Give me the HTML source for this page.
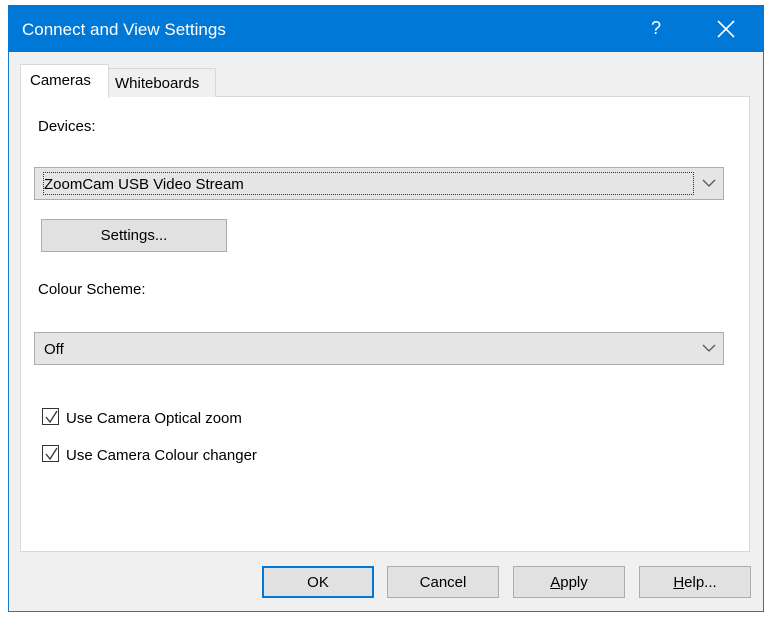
<!DOCTYPE html>
<html><head><style>
body{margin:0;width:774px;height:621px;background:#fff;position:relative;font-family:"Liberation Sans",sans-serif;font-size:15px;color:#000;overflow:hidden}
.a{position:absolute;box-sizing:border-box}
.win{left:8px;top:5px;width:756px;height:607px;background:#f0f0f0;border:1px solid #1979ca}
.title{left:8px;top:5px;width:756px;height:47px;background:#0078d7;color:#fff;font-size:17px}
.btn{background:#e1e1e1;border:1px solid #adadad;text-align:center;line-height:31px}
.combo{background:#e5e5e5;border:1px solid #adadad}
.cb{width:17px;height:17px;border:1px solid #333;background:#fff}
</style></head><body>
<div class="a win"></div>
<div class="a title"><span class="a" style="left:14px;top:15px">Connect and View Settings</span>
<span class="a" style="left:643px;top:13px;font-size:18px">?</span>
<svg class="a" style="left:709px;top:15px" width="18" height="18"><path d="M1 1L17 17M17 1L1 17" stroke="#fff" stroke-width="1.6"/></svg></div>
<div class="a" style="left:20px;top:96px;width:730px;height:456px;background:#fff;border:1px solid #d9d9d9"></div>
<div class="a" style="left:108px;top:68px;width:108px;height:29px;background:#f0f0f0;border:1px solid #d9d9d9;border-bottom:none"><span class="a" style="left:6px;top:6px">Whiteboards</span></div>
<div class="a" style="left:20px;top:64px;width:89px;height:34px;background:#fff;border:1px solid #d9d9d9;border-bottom:none"><span class="a" style="left:9px;top:7px">Cameras</span></div>
<span class="a" style="left:38px;top:118px">Devices:</span>
<div class="a combo" style="left:34px;top:167px;width:690px;height:33px"><div class="a" style="left:8px;top:4px;width:651px;height:23px;border:1px dotted #333"></div><span class="a" style="left:9px;top:8px">ZoomCam USB Video Stream</span>
<svg class="a" style="left:667px;top:10px" width="14" height="10"><path d="M1 2L7 8L13 2" stroke="#555" fill="none" stroke-width="1.3"/></svg></div>
<div class="a btn" style="left:41px;top:219px;width:186px;height:33px">Settings...</div>
<span class="a" style="left:38px;top:281px">Colour Scheme:</span>
<div class="a combo" style="left:34px;top:332px;width:690px;height:33px"><span class="a" style="left:9px;top:8px">Off</span>
<svg class="a" style="left:667px;top:10px" width="14" height="10"><path d="M1 2L7 8L13 2" stroke="#555" fill="none" stroke-width="1.3"/></svg></div>
<div class="a cb" style="left:42px;top:408px"><svg class="a" style="left:1px;top:1px" width="14" height="14"><path d="M2 7L6 12L13 1" stroke="#333" fill="none" stroke-width="1.3"/></svg></div>
<span class="a" style="left:66px;top:410px">Use Camera Optical zoom</span>
<div class="a cb" style="left:42px;top:445px"><svg class="a" style="left:1px;top:1px" width="14" height="14"><path d="M2 7L6 12L13 1" stroke="#333" fill="none" stroke-width="1.3"/></svg></div>
<span class="a" style="left:66px;top:447px">Use Camera Colour changer</span>
<div class="a btn" style="left:262px;top:566px;width:112px;height:32px;border:2px solid #0078d7;line-height:30px">OK</div>
<div class="a btn" style="left:387px;top:566px;width:112px;height:32px">Cancel</div>
<div class="a btn" style="left:513px;top:566px;width:112px;height:32px"><u>A</u>pply</div>
<div class="a btn" style="left:639px;top:566px;width:112px;height:32px"><u>H</u>elp...</div>
</body></html>
